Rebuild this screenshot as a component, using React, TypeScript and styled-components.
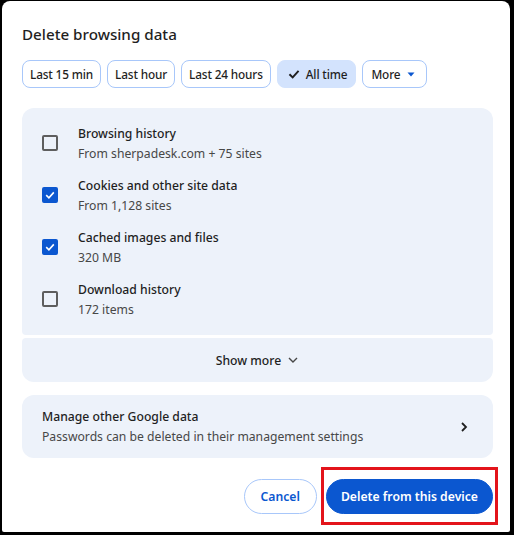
import React from "react";
import styled, { createGlobalStyle } from "styled-components";

const Global = createGlobalStyle`
  html, body { margin: 0; padding: 0; background: #000; }
  body { font-family: "Noto Sans", "Open Sans", sans-serif; color: #1f1f1f; }
  * { box-sizing: border-box; }
`;

const Screen = styled.div`
  width: 514px;
  height: 535px;
  background: #000;
  padding: 1px 4px 3px 2px;
`;

const Dialog = styled.div`
  height: 100%;
  background: #fff;
  border-radius: 8px 8px 2px 2px;
  padding: 21px 17px 0 20px;
  display: flex;
  flex-direction: column;
`;

const Title = styled.h1`
  margin: 0;
  font-size: 15.2px;
  line-height: 24px;
  font-weight: 500;
  color: #1f1f1f;
`;

const ChipRow = styled.div`
  display: flex;
  gap: 6px;
  margin-top: 14px;
`;

const Chip = styled.button<{ $selected?: boolean; $menu?: boolean }>`
  height: 28px;
  padding: ${(p) => (p.$selected ? "0 8px 0 10px" : p.$menu ? "0 11px 0 8px" : "0 7px")};
  border-radius: 8px;
  border: 1px solid ${(p) => (p.$selected ? "#d3e3fd" : "#a8c7fa")};
  background: ${(p) => (p.$selected ? "#d3e3fd" : "#fff")};
  color: #1f1f1f;
  font-family: inherit;
  font-size: 11.8px;
  letter-spacing: -0.15px;
  font-weight: 500;
  display: flex;
  align-items: center;
  gap: ${(p) => (p.$menu ? "7px" : "6px")};
`;

const ListPanel = styled.div`
  margin-top: 20px;
  background: #edf2fa;
  border-radius: 12px 12px 4px 4px;
  padding: 9px 0 10px 20px;
  display: flex;
  flex-direction: column;
`;

const Row = styled.div`
  height: 52px;
  display: flex;
  align-items: center;
  gap: 20px;
`;

const Box = styled.span<{ $checked?: boolean }>`
  width: 16px;
  height: 16px;
  border-radius: 2px;
  border: 2px solid ${(p) => (p.$checked ? "#0b57d0" : "#5e5e5e")};
  background: ${(p) => (p.$checked ? "#0b57d0" : "transparent")};
  display: flex;
  align-items: center;
  justify-content: center;
  flex: none;
`;

const TextCol = styled.div<{ $shift?: number }>`
  display: flex;
  flex-direction: column;
  padding-top: ${(p) => p.$shift ?? 0}px;
`;

const Label = styled.div`
  font-size: 12.2px;
  line-height: 20px;
  font-weight: 500;
  color: #1f1f1f;
`;

const Sub = styled.div`
  font-size: 12.2px;
  line-height: 20px;
  color: #474747;
`;

const ShowMore = styled.div`
  margin-top: 3px;
  height: 44px;
  background: #edf2fa;
  border-radius: 4px 4px 12px 12px;
  display: flex;
  align-items: center;
  justify-content: center;
  gap: 6px;
  font-size: 12.2px;
  font-weight: 500;
  color: #1f1f1f;
`;

const Manage = styled.div`
  margin-top: 13px;
  height: 63px;
  background: #edf2fa;
  border-radius: 12px;
  padding: 0 24px 0 20px;
  display: flex;
  align-items: center;
  justify-content: space-between;
`;

const Footer = styled.div`
  margin-top: 21px;
  display: flex;
  justify-content: flex-end;
  gap: 9px;
`;

const Button = styled.button<{ $primary?: boolean }>`
  height: 35px;
  border-radius: 18px;
  padding: 0 ${(p) => (p.$primary ? "14px" : "16px")};
  font-family: inherit;
  font-size: 12.2px;
  font-weight: 600;
  border: 1px solid ${(p) => (p.$primary ? "#0b57d0" : "#a8c7fa")};
  background: ${(p) => (p.$primary ? "#0b57d0" : "#fff")};
  color: ${(p) => (p.$primary ? "#fff" : "#0b57d0")};
`;

const Highlight = styled.div`
  position: relative;
  display: flex;
`;

const RedBox = styled.div`
  position: absolute;
  left: -5px;
  right: -5px;
  top: -12px;
  bottom: -11px;
  border: 3px solid #e3141b;
  pointer-events: none;
`;

const Check = ({ color = "#fff", size = 10 }: { color?: string; size?: number }) => (
  <svg width={size} height={size} viewBox="0 0 10 10">
    <path d="M1.2 5.2 L3.9 7.8 L8.8 2.4" fill="none" stroke={color} strokeWidth="1.6" />
  </svg>
);

const items = [
  { label: "Browsing history", sub: "From sherpadesk.com + 75 sites", checked: false },
  { label: "Cookies and other site data", sub: "From 1,128 sites", checked: true },
  { label: "Cached images and files", sub: "320 MB", checked: true },
  { label: "Download history", sub: "172 items", checked: false },
];

export default function App() {
  return (
    <>
      <Global />
      <Screen>
        <Dialog>
          <Title>Delete browsing data</Title>
          <ChipRow>
            <Chip>Last 15 min</Chip>
            <Chip>Last hour</Chip>
            <Chip>Last 24 hours</Chip>
            <Chip $selected>
              <Check color="#1f1f1f" size={12} />
              All time
            </Chip>
            <Chip $menu>
              More
              <svg width="8" height="5" viewBox="0 0 8 5">
                <path d="M0.5 0.5 L7.5 0.5 L4 4.5 Z" fill="#0b57d0" />
              </svg>
            </Chip>
          </ChipRow>
          <ListPanel>
            {items.map((it) => (
              <Row key={it.label}>
                <Box $checked={it.checked}>{it.checked && <Check />}</Box>
                <TextCol $shift={2}>
                  <Label>{it.label}</Label>
                  <Sub>{it.sub}</Sub>
                </TextCol>
              </Row>
            ))}
          </ListPanel>
          <ShowMore>
            Show more
            <svg width="12" height="12" viewBox="0 0 12 12">
              <path d="M2 4 L6 8 L10 4" fill="none" stroke="#474747" strokeWidth="1.4" />
            </svg>
          </ShowMore>
          <Manage>
            <TextCol $shift={1}>
              <Label>Manage other Google data</Label>
              <Sub>Passwords can be deleted in their management settings</Sub>
            </TextCol>
            <svg width="10" height="12" viewBox="0 0 10 12">
              <path d="M3 2 L7 6 L3 10" fill="none" stroke="#1f1f1f" strokeWidth="1.8" />
            </svg>
          </Manage>
          <Footer>
            <Button>Cancel</Button>
            <Highlight>
              <Button $primary>Delete from this device</Button>
              <RedBox />
            </Highlight>
          </Footer>
        </Dialog>
      </Screen>
    </>
  );
}
